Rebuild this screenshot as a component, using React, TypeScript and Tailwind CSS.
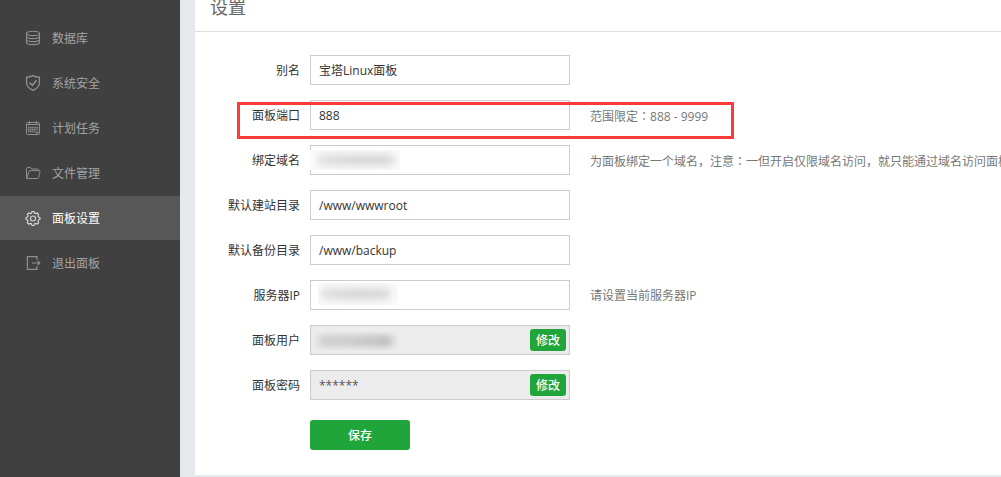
import type { ReactNode } from 'react';

const DatabaseIcon = () => (
  <svg viewBox="0 0 16 16" className="size-4" fill="none" stroke="currentColor" strokeWidth="1.1">
    <ellipse cx="8" cy="3.4" rx="6.5" ry="2.2" />
    <path d="M1.500 3.400v3c0 1.200 2.900 2.200 6.500 2.200s6.500-1 6.500-2.200v-3" />
    <path d="M1.500 6.400v3c0 1.200 2.900 2.200 6.500 2.200s6.500-1 6.500-2.200v-3" />
    <path d="M1.500 9.400v3c0 1.200 2.900 2.200 6.500 2.200s6.500-1 6.500-2.200v-3" />
  </svg>
);

const ShieldIcon = () => (
  <svg viewBox="0 0 16 16" className="size-4" fill="none" stroke="currentColor" strokeWidth="1.3">
    <path d="M8 .6C6 1.700 3.800 2.100 1.600 2.100v6c0 3.200 2.600 5.600 6.400 7.300 3.800-1.700 6.400-4.100 6.400-7.300v-6C12.200 2.100 10 1.700 8 .6z" />
    <path d="M4.600 7.700l2.700 2.600 4.300-5" strokeWidth="1.600" />
  </svg>
);

const CalendarIcon = () => (
  <svg viewBox="0 0 16 16" className="size-4" fill="none" stroke="currentColor" strokeWidth="1">
    <rect x="1.500" y="2.500" width="13" height="12" rx="1" />
    <path d="M1.500 4.500h13M4.500 1v3M11.500 1v3" />
    <path d="M3 7.500h10M3 9.500h10M3 11.500h7" strokeDasharray="1.500 .6" strokeWidth="1.300" />
    <path d="M10.500 12.500h3" strokeWidth="1.600" />
  </svg>
);

const FolderIcon = () => (
  <svg viewBox="0 0 16 16" className="size-4" fill="none" stroke="currentColor" strokeWidth="1" strokeLinejoin="round">
    <path d="M1.500 13.500v-10q0-1 1-1h3l1.500 1.500h5.500q1 0 1 1v.5" />
    <path d="M1.500 13.500L4 6.500q.3-.9 1.200-.9h9.300q.8 0 .6.800l-1.600 6.300q-.2.800-1 .8z" />
  </svg>
);

const GearIcon = () => (
  <svg viewBox="-.6 -.1 17.200 17.200" className="size-4" fill="none" stroke="currentColor" strokeWidth="1.200" strokeLinejoin="round">
    <path d="M6.900 1.500h2.200l.5 1.700 1.300.6 1.700-.8 1.500 1.500-.8 1.700.5 1.200 1.700.5v2.200l-1.700.6-.5 1.200.8 1.700-1.500 1.500-1.700-.8-1.300.5-.5 1.700H6.900l-.5-1.700-1.300-.5-1.700.8-1.500-1.500.8-1.700-.5-1.200L.5 10.100V7.900l1.700-.5.5-1.200-.8-1.700L3.400 3l1.700.8 1.300-.6z" />
    <circle cx="8" cy="9" r="2.700" />
  </svg>
);

const LogoutIcon = () => (
  <svg viewBox="0 0 16 16" className="size-4" fill="none" stroke="currentColor" strokeWidth="1.200">
    <path d="M12 5V1.600H2.400v12.800H12V11" />
    <path d="M7 8h7.800M12.600 5.800L14.800 8l-2.200 2.200" />
  </svg>
);

const menu = [
  { text: '数据库', icon: <DatabaseIcon /> },
  { text: '系统安全', icon: <ShieldIcon /> },
  { text: '计划任务', icon: <CalendarIcon /> },
  { text: '文件管理', icon: <FolderIcon /> },
  { text: '面板设置', icon: <GearIcon />, active: true },
  { text: '退出面板', icon: <LogoutIcon /> },
];

type RowProps = {
  id: string;
  label: string;
  value?: string;
  hint?: ReactNode;
  locked?: boolean;
  highlighted?: boolean;
  mask?: ReactNode;
};

const Colon = () => <span className="font-['Noto_Sans_CJK_TC',sans-serif]">：</span>;

function Row({ id, label, value = '', hint, locked, highlighted, mask }: RowProps) {
  return (
    <div className="relative flex items-center">
      <label htmlFor={id} className="mr-2.5 w-[105px] shrink-0 pt-0.5 text-right">
        {label}
      </label>
      <div className="relative w-[260px] shrink-0">
        <input
          id={id}
          defaultValue={value}
          readOnly={locked}
          className={
            locked
              ? 'block h-[30px] w-full border border-[#ccc] bg-[#ececec] pr-12 pl-2 text-[#555] outline-none'
              : 'block h-[30px] w-full border border-[#ccc] bg-white px-2 outline-none'
          }
        />
        {mask}
        {locked && (
          <button type="button" className="absolute top-1 right-1 h-[22px] w-9 rounded-[3px] bg-[#20a53a] pt-0.5 font-medium text-white">
            修改
          </button>
        )}
      </div>
      {hint && <span className="ml-5 pt-0.5 whitespace-nowrap text-[#777]">{hint}</span>}
      {highlighted && (
        <div className="pointer-events-none absolute top-0.5 left-[42px] h-[37px] w-[497px] border-3 border-[#fc3a39]" />
      )}
    </div>
  );
}

export default function App() {
  return (
    <div className="flex min-h-screen bg-[#e5e9ee] font-['Open_Sans','Noto_Sans_CJK_SC',sans-serif] text-xs text-[#333]">
      <nav className="flex w-[180px] shrink-0 flex-col gap-px bg-[#404040] pt-4">
        {menu.map((item) => (
          <a
            key={item.text}
            href="#"
            className={
              item.active
                ? 'flex h-11 items-center bg-[#575757] pl-[25px] text-white'
                : 'flex h-11 items-center pl-[25px] text-[#a3a3a3]'
            }
          >
            <span className={item.active ? 'text-[#dcdcdc]' : 'text-[#8f8f8f]'}>{item.icon}</span>
            <span className="ml-[11px] pt-0.5">{item.text}</span>
          </a>
        ))}
      </nav>

      <main className="min-w-0 flex-1 pl-[15px]">
        <section className="overflow-hidden bg-white">
          <h1 className="border-b border-[#ddd] pb-[17px] pl-[15px] text-lg leading-3.5 text-[#666]">设置</h1>
          <form className="flex flex-col gap-[15px] pt-[23px] pb-[25px]" onSubmit={(e) => e.preventDefault()}>
            <Row id="alias" label="别名" value="宝塔Linux面板" />
            <Row
              id="port"
              label="面板端口"
              value="888"
              highlighted
              hint={<>范围限定<Colon />888 - 9999</>}
            />
            <Row
              id="domain"
              label="绑定域名"
              hint={<>为面板绑定一个域名，注意<Colon />一但开启仅限域名访问，就只能通过域名访问面板</>}
              mask={
                <div className="absolute top-[5px] left-0 flex h-5 w-[90px] items-center overflow-hidden bg-[#fbfbfb] pl-2">
                  <div className="h-2.5 w-[76px] bg-linear-to-r from-[#dededf] via-[#cfcfd2] to-[#d4d4d6] blur-xs" />
                </div>
              }
            />
            <Row id="site-dir" label="默认建站目录" value="/www/wwwroot" />
            <Row id="backup-dir" label="默认备份目录" value="/www/backup" />
            <Row
              id="server-ip"
              label="服务器IP"
              hint="请设置当前服务器IP"
              mask={
                <div className="absolute top-[3px] left-2 flex h-[22px] w-20 items-center overflow-hidden bg-[#fafafa] pl-1">
                  <div className="h-2.5 w-[68px] bg-linear-to-r from-[#dadada] via-[#cfcfcf] to-[#d4d4d4] blur-xs" />
                </div>
              }
            />
            <Row
              id="user"
              label="面板用户"
              locked
              mask={
                <div className="absolute top-[7px] left-1 flex h-[18px] w-[84px] items-center overflow-hidden pl-1">
                  <div className="h-2.5 w-[74px] bg-linear-to-r from-[#cacaca] via-[#c2c2c2] to-[#b2b2b2] blur-xs" />
                </div>
              }
            />
            <Row id="password" label="面板密码" value="******" locked />
            <div className="mt-[5px] pl-[115px]">
              <button type="submit" className="block h-[30px] w-[100px] rounded-[3px] bg-[#20a53a] pt-0.5 font-medium text-white">
                保存
              </button>
            </div>
          </form>
        </section>
      </main>
    </div>
  );
}
